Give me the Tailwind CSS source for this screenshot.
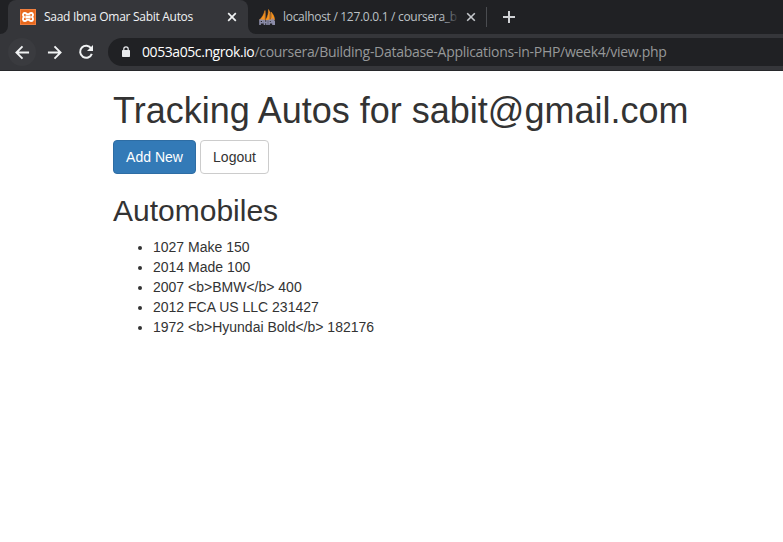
<!DOCTYPE html>
<html lang="en">
<head>
<meta charset="utf-8">
<title>Saad Ibna Omar Sabit Autos</title>
<script src="https://cdn.jsdelivr.net/npm/@tailwindcss/browser@4"></script>
</head>
<body class="h-[542px] overflow-hidden bg-white font-['Liberation_Sans',Arial,sans-serif] text-sm leading-5 text-[#333]">
<header class="bg-[#202124] font-['Open_Sans','Noto_Sans',sans-serif]">
  <div class="flex h-[34px]">
    <div class="flex w-2 items-end bg-[#35363a]"><div class="h-full w-full rounded-br-lg bg-[#202124]"></div></div>
    <div class="flex w-[240px] items-center rounded-t-lg bg-[#35363a] pl-3 pr-[11px]">
      <svg class="size-4 shrink-0" viewBox="0 0 16 16"><rect width="16" height="16" fill="#f08040"/><rect x="1" y="1" width="14" height="14" fill="#e8681c"/><path d="M4 8C2.300 6.500 2.800 4 4.800 4C6.500 4 6.500 5.500 8 5.500S9.500 4 11.200 4C13.200 4 13.700 6.500 12 8C13.700 9.500 13.200 12 11.200 12C9.500 12 9.500 10.500 8 10.500S6.500 12 4.800 12C2.800 12 2.300 9.500 4 8ZM6.300 6.500V9.500M9.700 6.500V9.500M6.500 8H9.500" fill="none" stroke="#fff" stroke-width="1.900"/></svg>
      <span class="ml-2 w-[170px] whitespace-nowrap text-xs tracking-[-0.29px] text-[#f1f3f4]">Saad Ibna Omar Sabit Autos</span>
      <svg class="ml-auto size-[10px]" viewBox="0 0 10 10"><path d="M1.200 1.200L8.800 8.800M8.800 1.200L1.200 8.800" stroke="#f1f3f4" stroke-width="1.700"/></svg>
    </div>
    <div class="w-2 bg-[#35363a]"><div class="h-full w-full rounded-bl-lg bg-[#202124]"></div></div>
    <div class="flex w-[230px] items-center pl-[3px] pr-[10px]">
      <svg class="size-4 shrink-0" viewBox="0 0 16 16"><path d="M.5 11C3.500 8 5 5 6 1.500C6.700 5 6.500 8 6 11ZM6.500 11C9 7.500 9.500 4 9.500 .5C12 4 12 7.500 11 11ZM11.500 11C12.700 8.500 12.500 6 12 3C14.500 5.500 15.700 8.500 15.500 11Z" fill="#f7931e" stroke="#f7931e" stroke-width=".5"/><path d="M6.300 3V11M11 4V11" stroke="#755138" stroke-width=".7"/><path d="M1 16V11.300H3.800V13.800H1M5.500 16V11M5.500 13.500H8M8 11V16M10 16V11.300H12.500V13.800H10M14 16V11L15.500 13V16" fill="none" stroke="#8b8ca9" stroke-width="1.600"/></svg>
      <span class="relative ml-2 w-[175px] whitespace-nowrap text-xs tracking-[-0.3px] text-[#bdc1c6]">localhost / 127.0.0.1 / coursera_b<span class="absolute inset-y-0 right-0 w-4 bg-linear-to-r from-[#202124]/0 to-[#202124]/90"></span></span>
      <svg class="ml-auto size-[10px]" viewBox="0 0 10 10"><path d="M1.200 1.200L8.800 8.800M8.800 1.200L1.200 8.800" stroke="#c5c8cc" stroke-width="1.600"/></svg>
    </div>
    <div class="flex items-center"><div class="h-5 w-px bg-[#4a4c50]"></div><svg class="ml-4 size-3" viewBox="0 0 12 12"><path d="M6 0V12M0 6H12" stroke="#d0d2d5" stroke-width="2"/></svg></div>
  </div>
  <div class="flex h-[37px] items-start border-b border-[#27282b] bg-[#35363a] pt-1">
    <div class="ml-2 flex size-7 items-center justify-center rounded-full bg-[#3a3b3f]"><svg class="size-[15px]" viewBox="0 0 16 16"><path d="M15 8H2M8 1.500L1.500 8L8 14.500" fill="none" stroke="#f1f3f4" stroke-width="2"/></svg></div>
    <div class="ml-1 flex size-7 items-center justify-center"><svg class="size-[15px]" viewBox="0 0 16 16"><path d="M1 8H14M8 1.500L14.500 8L8 14.500" fill="none" stroke="#f1f3f4" stroke-width="2"/></svg></div>
    <div class="ml-1 flex size-7 items-center justify-center"><svg class="size-4" viewBox="0 0 16 16"><path d="M13.200 4.500A6 6 0 1 0 13.800 9.800" fill="none" stroke="#f1f3f4" stroke-width="2"/><path d="M15 1V7H9Z" fill="#f1f3f4"/></svg></div>
    <div class="ml-2 flex h-7 flex-1 items-center rounded-l-full bg-[#202124] pl-[14px]">
      <svg class="-mt-px h-[11px] w-2" viewBox="0 0 8 11"><path d="M1.800 5V3A2.200 2.200 0 0 1 6.200 3V5" fill="none" stroke="#e8eaed" stroke-width="1.200"/><rect y="4" width="8" height="7" rx=".7" fill="#e8eaed"/></svg>
      <span class="ml-3 whitespace-nowrap text-sm tracking-[-0.29px] text-[#969899]"><span class="tracking-[-0.42px] text-white">0053a05c.ngrok.io</span>/coursera/Building-Database-Applications-in-PHP/week4/view.php</span>
    </div>
  </div>
</header>
<main class="pl-[113px] pt-5">
  <h1 class="whitespace-nowrap text-[36px] leading-[1.1]">Tracking Autos for sabit@gmail.com</h1>
  <div class="mt-[9.400px] flex gap-1">
    <button class="h-[34px] w-[83px] rounded border border-[#2e6da4] bg-[#337ab7] text-white">Add New</button>
    <button class="h-[34px] w-[69px] rounded border border-[#ccc] bg-white">Logout</button>
  </div>
  <h2 class="mt-5 text-[30px] leading-[1.1]">Automobiles</h2>
  <ul class="mt-[10px] list-disc pl-10">
    <li>1027 Make 150</li>
    <li>2014 Made 100</li>
    <li>2007 &lt;b&gt;BMW&lt;/b&gt; 400</li>
    <li>2012 FCA US LLC 231427</li>
    <li>1972 &lt;b&gt;Hyundai Bold&lt;/b&gt; 182176</li>
  </ul>
</main>
</body>
</html>
